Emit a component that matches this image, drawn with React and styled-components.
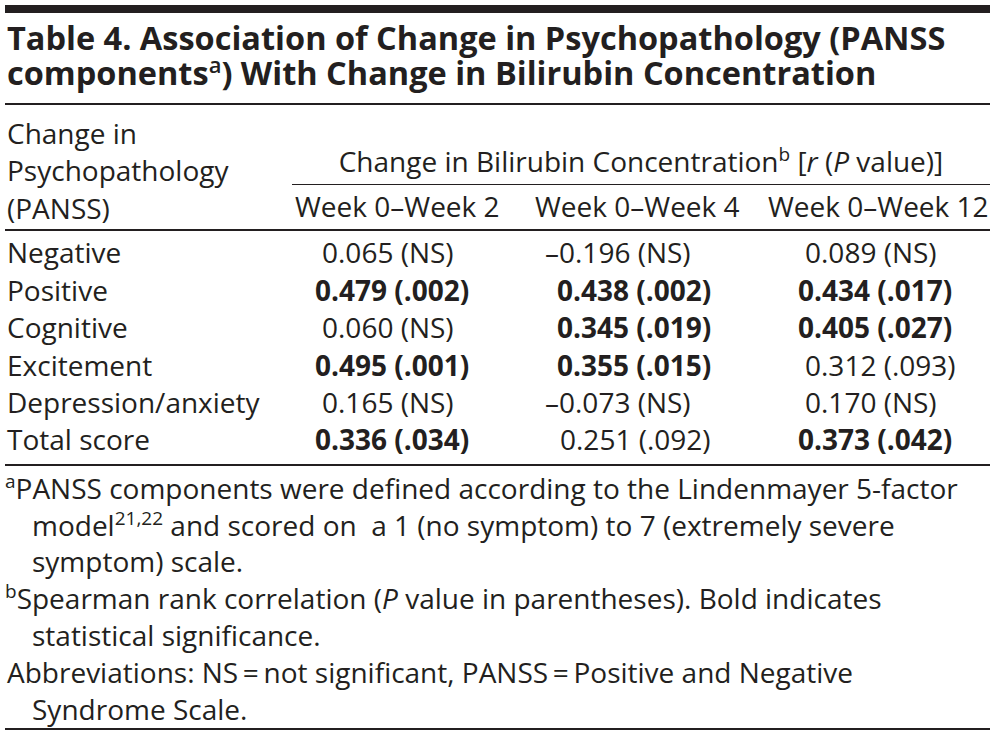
import React from "react";
import styled, { createGlobalStyle } from "styled-components";

const ink = "#231f20";

const Global = createGlobalStyle`
  html, body { margin: 0; padding: 0; background: #fff; }
  body {
    font-family: "Open Sans", "Noto Sans", "Liberation Sans", sans-serif;
    color: ${ink};
  }
`;

const Page = styled.div`
  margin: 0 7px 0 5px;
  padding-top: 5px;
`;

const TopRule = styled.div`
  height: 8px;
  background: ${ink};
`;

const Title = styled.h1`
  margin: 0;
  padding: 7px 0 0 2px;
  font-size: 32.5px;
  font-weight: 700;
  line-height: 35px;
  border-bottom: 2px solid ${ink};
  height: 92px;
  box-sizing: border-box;
`;

const TitleLine = styled.span`
  display: block;
  white-space: nowrap;
`;

const Sup = styled.sup`
  font-size: ${(p) => p.$size || 19}px;
  font-weight: ${(p) => p.$weight || 400};
  line-height: 0;
  vertical-align: ${(p) => p.$raise || 11}px;
`;

const Table = styled.div`
  font-size: 28px;
  line-height: 37.5px;
`;

const cols = "287px 240px 233px 225px";

const Head = styled.div`
  display: grid;
  grid-template-columns: ${cols};
  grid-template-rows: 80px 44px;
  border-bottom: 2px solid ${ink};
`;

const StubHead = styled.div`
  grid-row: 1 / span 2;
  grid-column: 1;
  align-self: end;
  padding: 0 0 2px 2px;
`;

const Spanner = styled.div`
  grid-row: 1;
  grid-column: 2 / span 3;
  align-self: end;
  text-align: center;
  padding: 0 0 4px 0;
  border-bottom: 1.5px solid ${ink};
  white-space: nowrap;
`;

const Italic = styled.i`
  font-style: italic;
`;

const WeekHead = styled.div`
  grid-row: 2;
  padding: 3px 0 0 3px;
  white-space: nowrap;
`;

const Body = styled.div`
  display: grid;
  grid-template-columns: ${cols};
  grid-auto-rows: 37.4px;
  padding: 3.4px 0 5px;
  border-bottom: 2px solid ${ink};
`;

const Stub = styled.div`
  padding-left: 2px;
  white-space: nowrap;
`;

const Value = styled.div`
  white-space: nowrap;
  padding-left: ${(p) => p.$pad}px;
  font-weight: ${(p) => (p.$bold ? 700 : 400)};
`;

const Notes = styled.div`
  font-size: 28px;
  line-height: 36.8px;
  padding: 4px 0 1px;
  border-bottom: 2px solid ${ink};
  display: flex;
  flex-direction: column;
`;

const Note = styled.p`
  margin: 0;
  padding-left: 27px;
  white-space: nowrap;
`;

const Line = styled.span`
  display: block;
  margin-left: ${(p) => (p.$first ? (p.$marked ? -27 : -25) : 0)}px;
`;

const colPad = [
  { reg: 30, bold: 23, neg: 30 },
  { reg: 28, bold: 25, neg: 13 },
  { reg: 40, bold: 33, neg: 40 },
];

const rows = [
  ["Negative", [["0.065 (NS)"], ["\u20130.196 (NS)", 0, 1], ["0.089 (NS)"]]],
  ["Positive", [["0.479 (.002)", 1], ["0.438 (.002)", 1], ["0.434 (.017)", 1]]],
  ["Cognitive", [["0.060 (NS)"], ["0.345 (.019)", 1], ["0.405 (.027)", 1]]],
  ["Excitement", [["0.495 (.001)", 1], ["0.355 (.015)", 1], ["0.312 (.093)"]]],
  ["Depression/anxiety", [["0.165 (NS)"], ["\u20130.073 (NS)", 0, 1], ["0.170 (NS)"]]],
  ["Total score", [["0.336 (.034)", 1], ["0.251 (.092)"], ["0.373 (.042)", 1]]],
];

export default function App() {
  return (
    <Page>
      <Global />
      <TopRule />
      <Title>
        <TitleLine>Table 4. Association of Change in Psychopathology (PANSS</TitleLine>
        <TitleLine>
          components<Sup $size={22} $weight={600} $raise={12}>a</Sup>) With Change in Bilirubin Concentration
        </TitleLine>
      </Title>
      <Table>
        <Head>
          <StubHead>
            Change in
            <br />
            Psychopathology
            <br />
            (PANSS)
          </StubHead>
          <Spanner>
            Change in Bilirubin Concentration<Sup>b</Sup> [<Italic>r</Italic> (<Italic>P</Italic> value)]
          </Spanner>
          <WeekHead>Week 0–Week 2</WeekHead>
          <WeekHead>Week 0–Week 4</WeekHead>
          <WeekHead>Week 0–Week 12</WeekHead>
        </Head>
        <Body>
          {rows.map(([label, vals]) => (
            <React.Fragment key={label}>
              <Stub>{label}</Stub>
              {vals.map(([v, bold, neg], i) => (
                <Value
                  key={i}
                  $bold={!!bold}
                  $pad={bold ? colPad[i].bold : neg ? colPad[i].neg : colPad[i].reg}
                >
                  {v}
                </Value>
              ))}
            </React.Fragment>
          ))}
        </Body>
      </Table>
      <Notes>
        <Note>
          <Line $first $marked>
            <Sup>a</Sup>PANSS components were defined according to the Lindenmayer 5-factor
          </Line>
          <Line>
            model<Sup>21,22</Sup> and scored on{"\u00a0"} a 1 (no symptom) to 7 (extremely severe
          </Line>
          <Line>symptom) scale.</Line>
        </Note>
        <Note>
          <Line $first $marked>
            <Sup>b</Sup>Spearman rank correlation (<Italic>P</Italic> value in parentheses). Bold indicates
          </Line>
          <Line>statistical significance.</Line>
        </Note>
        <Note>
          <Line $first>
            Abbreviations: NS{"\u2009=\u2009"}not significant, PANSS{"\u2009=\u2009"}Positive and Negative
          </Line>
          <Line>Syndrome Scale.</Line>
        </Note>
      </Notes>
    </Page>
  );
}
